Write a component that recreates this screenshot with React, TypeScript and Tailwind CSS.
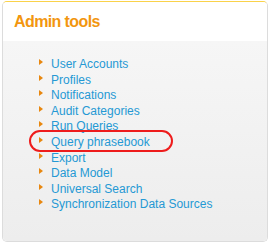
const items = [
  'User Accounts',
  'Profiles',
  'Notifications',
  'Audit Categories',
  'Run Queries',
  'Query phrasebook',
  'Export',
  'Data Model',
  'Universal Search',
  'Synchronization Data Sources',
];

function Bullet() {
  return (
    <svg width="4" height="6" viewBox="0 0 4 6" className="absolute left-[-12px] top-[2px]">
      <path d="M0 0 L4 3 L0 6 Z" fill="#e8870f" />
    </svg>
  );
}

export default function App() {
  return (
    <div className="w-[270px] h-[243px] bg-white pl-[2px] pt-[1px]" style={{ fontFamily: '"Liberation Sans", Arial, sans-serif' }}>
      <div className="w-[266px] h-[241px] flex flex-col rounded-[5px] overflow-hidden border border-[#dcdcdc] border-t-[#fad24a]">
        {/* Header */}
        <div className="h-[39px] bg-white border-l border-r border-[#fad24a] -mx-px px-[11px] pt-[10px]">
          <h2 className="text-[16px] font-bold tracking-[-0.6px] text-[#f2960f] leading-[20px]">Admin tools</h2>
        </div>

        {/* Body */}
        <div className="flex-1 bg-gradient-to-b from-[#f6f6f6] to-[#ededed] pl-[48px] pt-[16px]">
          <ul className="flex flex-col">
            {items.map((name) => (
              <li key={name} className="relative h-[15.6px] text-[12px] leading-[15.6px] text-[#2599d4]">
                <Bullet />
                {name === 'Query phrasebook' && (
                  <span className="absolute left-[-22px] top-[-5px] w-[144px] h-[22px] rounded-[11px] border-2 border-[#ee1c1c]" />
                )}
                <a>{name}</a>
              </li>
            ))}
          </ul>
        </div>
      </div>
    </div>
  );
}
